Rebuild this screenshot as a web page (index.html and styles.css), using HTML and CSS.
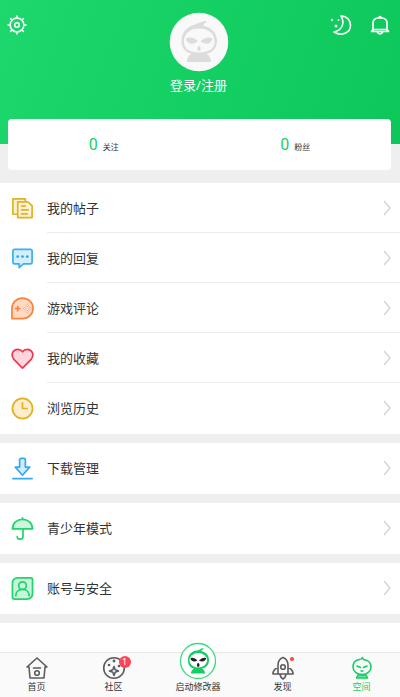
FILE: index.html
```html
<!DOCTYPE html>
<html lang="zh-CN">
<head>
<meta charset="utf-8">
<meta name="viewport" content="width=device-width, initial-scale=1">
<title>空间</title>
<link rel="stylesheet" href="styles.css">
</head>
<body>
<div class="app">
  <header class="hero">
    <button class="icon-btn" aria-label="设置">
      <svg width="20" height="20" viewBox="0 0 20 20" fill="none" stroke="#fff" stroke-width="1.5" stroke-linecap="round"><circle cx="10" cy="10" r="6.9"/><circle cx="10" cy="10" r="2.3"/><path d="M10 3V1M10 19v-2M3 10H1M19 10h-2M5 5 3.6 3.6M15 5l1.4-1.4M5 15l-1.4 1.4M15 15l1.4 1.4"/></svg>
    </button>
    <a class="profile" href="#login">
      <svg class="avatar" width="60" height="60" viewBox="0 0 60 60"><circle cx="30" cy="30" r="29.3" fill="#f9f9f9"/><path fill="#dcdcdc" fill-rule="evenodd" d="M12.500 29C12.500 20 18 15 26 12.500C30 11 33 9 38 9Q35 11 34 14C42 15 48 20.500 48 29C48 37 42 42 35 42H25C18 42 12.500 37 12.500 29ZM15 30C15 37 21 40.500 30 40.500S45.500 37 45.500 30C45.500 21 39 16.500 30 16.500S15 21 15 30Z"/><path fill="#dcdcdc" d="M17 26.500c4-2.500 9 0 12 2.500-4 4.500-11 3.500-12-2.500ZM43.500 26.500c-4-2.500-9 0-12 2.500 4 4.500 11 3.500 12-2.500ZM18 50c0-5 3-8 6-9h12c3 1 6 4 6 9Z"/><ellipse cx="30" cy="36.500" rx="1.600" ry="2.500" fill="#dcdcdc"/></svg>
      <span>登录/注册</span>
    </a>
    <div class="hero-actions">
      <button class="icon-btn" aria-label="夜间模式">
        <svg width="22" height="20" viewBox="0 0 22 20" fill="none" stroke="#fff" stroke-width="1.600" stroke-linejoin="round"><path d="M11 1C17.500 1 20.500 6 20.500 10.500C20.500 18 11.500 21.500 4 17C11.500 15.500 15.500 8.500 11 1Z"/><g fill="#fff" stroke="none"><circle cx="2" cy="5" r="1.200"/><circle cx="8.500" cy="5" r="0.900"/><circle cx="6" cy="11" r="1.500"/></g></svg>
      </button>
      <button class="icon-btn" aria-label="消息">
        <svg width="20" height="20" viewBox="0 0 20 20" fill="none" stroke="#fff" stroke-width="1.700" stroke-linecap="round" stroke-linejoin="round"><path d="M3 15V8a5 5 0 0 1 5-5h4a5 5 0 0 1 5 5v7M3 14.500h14l1.500 2h-17ZM7.500 17.500q2.500 2.600 5 0M9 2.500q1-2 2 0"/></svg>
      </button>
    </div>
  </header>

  <main class="content">
    <section class="stats">
      <a href="#follow"><b>0</b><span>关注</span></a>
      <a href="#fans"><b>0</b><span>粉丝</span></a>
    </section>

    <nav class="group" aria-label="我的内容">
      <a class="row" href="#posts">
        <svg class="ico" viewBox="0 0 24 24" fill="#fcf4d8" stroke="#e6b020" stroke-width="1.800" stroke-linejoin="round"><path d="M2 2h13v16H2Z"/><path d="M7 5h10.500L22 9v12.500H7Z"/><path d="M11 9.500h4M11 13.500h7M11 17.500h6" stroke-linecap="round"/></svg>
        <span class="label">我的帖子</span><svg class="chev" viewBox="0 0 8 14"><path d="M1 0l6 7-6 7"/></svg>
      </a>
      <a class="row" href="#replies">
        <svg class="ico" viewBox="0 0 24 24" fill="#d4effc" stroke="#3bb2ee" stroke-width="1.800" stroke-linejoin="round"><path d="M3.500 2.500h17a1.500 1.500 0 0 1 1.500 1.500v12a1.500 1.500 0 0 1-1.500 1.500H13l-4.500 4V17.500h-5A1.500 1.500 0 0 1 2 16V4a1.500 1.500 0 0 1 1.500-1.500Z"/><g fill="#2aa7e8" stroke="none"><circle cx="7" cy="10" r="1.400"/><circle cx="12" cy="10" r="1.400"/><circle cx="17" cy="10" r="1.400"/></g></svg>
        <span class="label">我的回复</span><svg class="chev" viewBox="0 0 8 14"><path d="M1 0l6 7-6 7"/></svg>
      </a>
      <a class="row" href="#reviews">
        <svg class="ico" viewBox="0 0 24 24" fill="#ffd9c2" stroke="#f98340" stroke-width="1.800"><path d="M1 22.500V12A11 10.700 0 1 1 12 22.500Z" stroke-linejoin="round"/><path d="M7 9v6M4 12h6"/><g fill="#fff" stroke-width="0.700"><path d="m17 7.800 1.200 1.200-1.200 1.200L15.800 9ZM17 13.800l1.200 1.200-1.200 1.200-1.200-1.200ZM14 10.800l1.200 1.200-1.200 1.200-1.200-1.200ZM20 10.800l1.200 1.200-1.200 1.200-1.200-1.200Z"/></g></svg>
        <span class="label">游戏评论</span><svg class="chev" viewBox="0 0 8 14"><path d="M1 0l6 7-6 7"/></svg>
      </a>
      <a class="row" href="#favorites">
        <svg class="ico" viewBox="0 0 24 24" fill="#ffd6dc" stroke="#f5364e" stroke-width="1.800" stroke-linejoin="round"><path d="M12 22 3 13C-1 7.500 2.500 2.500 7 2.500c2 0 4 1 5 2.500 1-1.500 3-2.500 5-2.500 4.500 0 8 5 4 10.500Z"/></svg>
        <span class="label">我的收藏</span><svg class="chev" viewBox="0 0 8 14"><path d="M1 0l6 7-6 7"/></svg>
      </a>
      <a class="row" href="#history">
        <svg class="ico" viewBox="0 0 24 24" fill="#fbefcf" stroke="#e6b020" stroke-width="1.800" stroke-linecap="round"><circle cx="12" cy="12" r="10.500"/><path d="M12 6v6h5" fill="none"/></svg>
        <span class="label">浏览历史</span><svg class="chev" viewBox="0 0 8 14"><path d="M1 0l6 7-6 7"/></svg>
      </a>
    </nav>

    <nav class="group" aria-label="下载">
      <a class="row" href="#downloads">
        <svg class="ico" viewBox="0 0 24 24" fill="#d4ebfc" stroke="#35aaf0" stroke-width="1.800" stroke-linejoin="round" stroke-linecap="round"><path d="M9 3q0-1.500 1.500-1.500h3q1.500 0 1.500 1.500v7.500h4.500L12 19l-7.500-8.500H9ZM2 22.500h20"/></svg>
        <span class="label">下载管理</span><svg class="chev" viewBox="0 0 8 14"><path d="M1 0l6 7-6 7"/></svg>
      </a>
    </nav>

    <nav class="group" aria-label="青少年">
      <a class="row" href="#teen">
        <svg class="ico" viewBox="0 0 24 24" fill="#d0f5df" stroke="#20d56c" stroke-width="1.800" stroke-linejoin="round" stroke-linecap="round"><path d="M1.500 12.500C1.500 6 6.500 2.500 12 2.500s10.500 3.500 10.500 10ZM12 2.500V1"/><path d="M12.500 12.500v8c0 3.500-6 3.500-6 0" fill="none"/></svg>
        <span class="label">青少年模式</span><svg class="chev" viewBox="0 0 8 14"><path d="M1 0l6 7-6 7"/></svg>
      </a>
    </nav>

    <nav class="group" aria-label="账号">
      <a class="row" href="#account">
        <svg class="ico" viewBox="0 0 24 24" fill="#c9f3da" stroke="#20d56c" stroke-width="1.800" stroke-linejoin="round" stroke-linecap="round"><path d="M7 1h13.500q2 0 2 2v14q0 6-6 6h-13q-2 0-2-2V7q0-6 5.500-6Z"/><circle cx="12" cy="9" r="4"/><path d="M5 19.500c0-3 2-6.500 7-6.500s7 3.500 7 6.500" fill="none"/></svg>
        <span class="label">账号与安全</span><svg class="chev" viewBox="0 0 8 14"><path d="M1 0l6 7-6 7"/></svg>
      </a>
    </nav>

    <div class="group rest"></div>
  </main>

  <nav class="tabs" aria-label="主导航">
    <a href="#home">
      <svg width="24" height="24" viewBox="0 0 24 24" fill="none" stroke="#5c5c5c" stroke-width="1.600" stroke-linejoin="round" stroke-linecap="round"><path d="m2 11 10-9 10 9M2 11h2l1 11h14l1-11h2M8.500 12h7"/><circle cx="12" cy="17" r="2.300"/></svg>
      <span>首页</span>
    </a>
    <a href="#community">
      <span class="tab-icon"><svg width="24" height="24" viewBox="0 0 24 24" fill="none" stroke="#5c5c5c" stroke-width="1.600" stroke-linejoin="round"><circle cx="12" cy="12" r="10.300"/><path d="m12 10.500 1.200 3.300 3.300 1.200-3.300 1.200L12 19.500l-1.200-3.300L7.500 15l3.300-1.200Z"/><g fill="#5c5c5c" stroke="none"><circle cx="12" cy="5" r="1.400"/><circle cx="7" cy="9" r="1.300"/><circle cx="17" cy="10" r="1.300"/></g></svg><i class="badge">1</i></span>
      <span>社区</span>
    </a>
    <a class="launch" href="#launch">
      <svg width="38" height="38" viewBox="0 0 38 38"><circle cx="19" cy="19" r="17.500" fill="#fff" stroke="#35dc80" stroke-width="1.300"/><path fill="#13cf63" d="M9 18c0-6 4-9 9-9.500 3-.5 4-2.500 7-2.500l-3 3c5 1 8 4 8 9 0 6-4 8-7 8.500 2 1 3 3 3 5H12c0-2 1-4 3-5-3-.5-6-2.500-6-8.500Z"/><ellipse cx="19.300" cy="18.300" rx="8.800" ry="7.200" fill="#fff"/><path fill="#222" d="M11.500 16q4-1 7 2.500c-3 2-7 1-7-2.500ZM27 16q-4-1-7 2.500c3 2 7 1 7-2.500Z"/><ellipse cx="19.200" cy="23" rx="1.300" ry="1.900" fill="#222"/></svg>
      <span>启动修改器</span>
    </a>
    <a href="#discover">
      <span class="tab-icon"><svg width="24" height="24" viewBox="0 0 24 24" fill="none" stroke="#5c5c5c" stroke-width="1.600" stroke-linejoin="round"><path d="M7 18V9c0-3.500 2.500-6.500 5-7.500 2.500 1 5 4 5 7.500v9ZM7 11.500c-3 1-5 3-5 6.500h5M17 11.500c3 1 5 3 5 6.500h-5M9 18.500q.5 3 3 4.500 2.500-1.500 3-4.500"/><circle cx="12" cy="11" r="2.300"/></svg><i class="dot"></i></span>
      <span>发现</span>
    </a>
    <a class="active" href="#space">
      <svg width="24" height="24" viewBox="0 0 24 24" fill="none" stroke="#13cf63" stroke-width="1.600" stroke-linejoin="round" stroke-linecap="round"><path d="M9.500 3.500C11 3.500 12 2.500 12.500 1.500l1 2C18 4 21 7 21 11c0 4.500-4 7.500-9 7.500S3 15.500 3 11c0-4 2.500-7 6.500-7.500ZM7 10l3.500 1.500M17 10l-3.500 1.500M11 15h2"/><path d="M8 19h8l1.500 3h-11Z" fill="#72df9e"/></svg>
      <span>空间</span>
    </a>
  </nav>
</div>
</body>
</html>
```
FILE: styles.css
```css
* {
  box-sizing: border-box;
}

body {
  margin: 0;
  background: #efefef;
  color: #333;
  font-family: "Noto Sans", "Noto Sans CJK SC", sans-serif;
  font-size: 13px;
}

a {
  color: inherit;
  text-decoration: none;
}

svg {
  display: block;
  flex: none;
}

.app {
  display: flex;
  flex-direction: column;
  height: 100vh;
}

.hero {
  display: grid;
  grid-template-columns: 1fr auto 1fr;
  align-items: start;
  flex: none;
  height: 144px;
  padding: 12px 10px 0 7px;
  background: linear-gradient(110deg, #1ed76d 0%, #14cf62 50%, #0dc75a 100%);
  color: #fff;
}

.icon-btn {
  justify-self: start;
  margin-top: 3px;
  padding: 0;
  border: 0;
  background: none;
}

.hero-actions {
  display: flex;
  justify-content: flex-end;
  gap: 18px;
}

.profile {
  display: flex;
  flex-direction: column;
  align-items: center;
  gap: 4px;
  line-height: 18px;
}

.content {
  display: flex;
  flex: 1;
  flex-direction: column;
  gap: 9px;
  min-height: 0;
  margin-top: -25px;
}

.stats {
  display: grid;
  grid-template-columns: 1fr 1fr;
  flex: none;
  height: 51px;
  margin: 0 9px 4px 8px;
  border-radius: 4px;
  background: #fff;
}

.stats a {
  display: flex;
  align-items: baseline;
  justify-content: center;
  gap: 5px;
  line-height: 51px;
  font-size: 8px;
}

.stats b {
  color: #20ce6a;
  font-family: Roboto, sans-serif;
  font-size: 16px;
  font-weight: 400;
}

.group {
  flex: none;
  padding-bottom: 1px;
  background: #fff;
}

.group.rest {
  flex: 1;
}

.row {
  display: flex;
  align-items: center;
  height: 50px;
  padding: 0 9px 0 11px;
}

.row:not(:last-child) {
  background: linear-gradient(#ebebeb, #ebebeb) 47px 100% / 100% 1px no-repeat;
}

.ico {
  width: 23px;
  height: 23px;
  margin-right: 13px;
}

.label {
  flex: 1;
  padding-bottom: 2px;
}

.chev {
  width: 8px;
  height: 14px;
  overflow: visible;
  fill: none;
  stroke: #d2d2d2;
  stroke-width: 1.3;
}

.tabs {
  display: grid;
  grid-template-columns: 73px 1fr 88px 1fr 77px;
  grid-template-rows: 100%;
  align-items: end;
  flex: none;
  height: 45px;
  padding-bottom: 3px;
  border-top: 1px solid #e8e8e8;
  background: #fafafa;
  font-size: 9px;
  line-height: 14px;
}

.tabs a {
  display: flex;
  flex-direction: column;
  align-items: center;
}

.tabs .active {
  color: #13cf63;
}

.tab-icon {
  position: relative;
}

.badge {
  position: absolute;
  top: 0;
  right: -5px;
  width: 12px;
  height: 12px;
  border-radius: 50%;
  background: #fb4655;
  color: #fff;
  font-size: 9px;
  font-style: normal;
  line-height: 12px;
  text-align: center;
}

.dot {
  position: absolute;
  top: 1px;
  right: 1px;
  width: 4px;
  height: 4px;
  border-radius: 50%;
  background: #fb4433;
}
```
